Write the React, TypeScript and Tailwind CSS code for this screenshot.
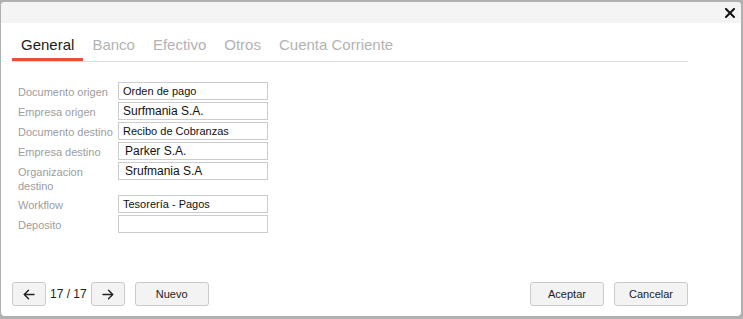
import React from "react";

const tabs = ["General", "Banco", "Efectivo", "Otros", "Cuenta Corriente"];

const rows: { label: string; value: string; big?: boolean; pad?: boolean }[] = [
  { label: "Documento origen", value: "Orden de pago" },
  { label: "Empresa origen", value: "Surfmania S.A.", big: true },
  { label: "Documento destino", value: "Recibo de Cobranzas" },
  { label: "Empresa destino", value: "Parker S.A.", big: true, pad: true },
  { label: "Organizacion destino", value: "Srufmania S.A", big: true, pad: true },
  { label: "Workflow", value: "Tesorería - Pagos" },
  { label: "Deposito", value: "" },
];

function Arrow({ dir }: { dir: "left" | "right" }) {
  return (
    <svg width="12" height="11" viewBox="0 0 12 11" fill="none" stroke="#222" strokeWidth="1.4" strokeLinecap="round" strokeLinejoin="round">
      {dir === "left" ? (
        <path d="M11 5.5H1.2M5.5 1.2L1.2 5.5L5.5 9.8" />
      ) : (
        <path d="M1 5.5H10.8M6.5 1.2L10.8 5.5L6.5 9.8" />
      )}
    </svg>
  );
}

const btn =
  "h-[24px] rounded-[3px] border border-[#cacaca] bg-[#f3f3f3] text-[11px] text-[#222] flex items-center justify-center";

export default function App() {
  return (
    <div className="w-[743px] h-[319px] overflow-hidden bg-[#b1b1b1] pt-[2px] pl-[1px] font-['Liberation_Sans',Arial,sans-serif]">
      <div className="w-[740px] h-[314px] bg-white rounded-[4px] flex flex-col overflow-hidden">
        <div className="h-[21px] bg-[#f4f4f4] flex items-center justify-end pr-[6px]">
          <svg width="10" height="10" viewBox="0 0 10 10" stroke="#111" strokeWidth="2" strokeLinecap="square">
            <path d="M1 1L9 9M9 1L1 9" />
          </svg>
        </div>

        <div className="ml-[11px] mt-[13px] w-[676px] flex border-b border-[#dddddd]">
          {tabs.map((t, i) => (
            <div
              key={t}
              className={
                i === 0
                  ? "px-[9px] pb-[4px] text-[15px] leading-[18px] text-[#1c1c1c] border-b-[3px] border-[#e8503a]"
                  : "px-[9px] pb-[4px] text-[15px] leading-[18px] text-[#b3b3b3] border-b-[3px] border-transparent"
              }
            >
              {t}
            </div>
          ))}
        </div>

        <div className="ml-[17px] mt-[20px] flex flex-col gap-[2px]">
          {rows.map((r) => (
            <div key={r.label} className="flex items-start">
              <div className="w-[100px] pt-[3px] text-[11px] leading-[14px] text-[#9d9d9d]">{r.label}</div>
              <div
                className={
                  "w-[150px] h-[18px] border border-[#cccccc] leading-[16px] text-[#111] " +
                  (r.big ? "text-[12px] " : "text-[11px] ") +
                  (r.pad ? "pl-[6px]" : "pl-[4px]")
                }
              >
                {r.value}
              </div>
            </div>
          ))}
        </div>

        <div className="mt-auto mb-[10px] ml-[11px] w-[676px] flex items-center justify-between">
          <div className="flex items-center">
            <button className={btn + " w-[34px]"}>
              <Arrow dir="left" />
            </button>
            <span className="mx-[4px] text-[12px] text-[#222]">17 / 17</span>
            <button className={btn + " w-[34px]"}>
              <Arrow dir="right" />
            </button>
            <button className={btn + " w-[74px] ml-[10px]"}>Nuevo</button>
          </div>
          <div className="flex items-center gap-[10px]">
            <button className={btn + " w-[74px]"}>Aceptar</button>
            <button className={btn + " w-[74px]"}>Cancelar</button>
          </div>
        </div>
      </div>
    </div>
  );
}
